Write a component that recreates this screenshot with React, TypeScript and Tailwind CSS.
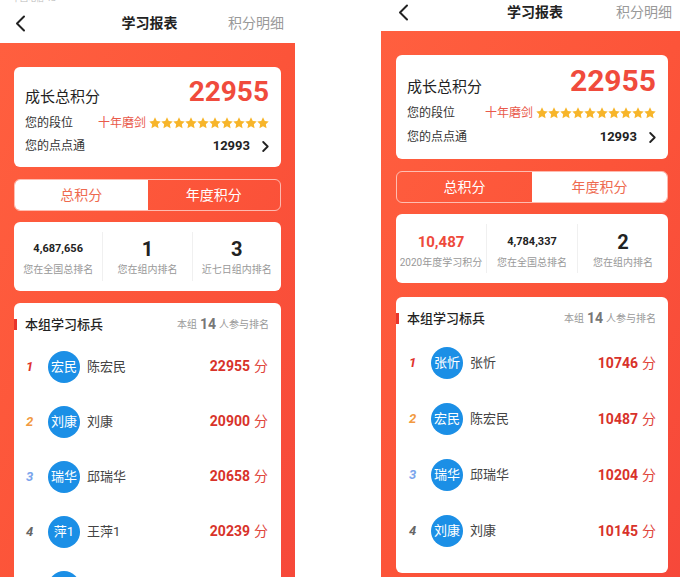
import React from "react";

type Stat = { v: string; l: string; t: "red" | "sm" | "big" };
type Row = { r: number; a: string; n: string; p: number };

const rankColor = ["text-[#e0322b]", "text-[#f29a3f]", "text-[#7aa4ec]", "text-[#666]"];

const Star = ({ size }: { size: number }) => (
  <svg width={size} height={size} viewBox="0 0 24 24">
    <path
      d="M12 0.6l3.5 7.2 7.9 1.1-5.7 5.6 1.4 7.9L12 18.6l-7.1 3.8 1.4-7.9L0.6 8.9l7.9-1.1z"
      fill="#f7b52a"
    />
  </svg>
);

const Back = () => (
  <svg width="11" height="17" viewBox="0 0 11 17" fill="none">
    <path d="M9 1.5L2 8.5l7 7" stroke="#222" strokeWidth="2" strokeLinecap="round" strokeLinejoin="round" />
  </svg>
);

const Arrow = () => (
  <svg width="7" height="11" viewBox="0 0 7 11" fill="none">
    <path d="M1.2 1l4.5 4.5-4.5 4.5" stroke="#222" strokeWidth="1.8" strokeLinecap="round" strokeLinejoin="round" />
  </svg>
);

function Phone({ w, tab, stats, rows }: { w: boolean; tab: 0 | 1; stats: Stat[]; rows: Row[] }) {
  return (
    <div className={w ? "w-[302px] shrink-0" : "w-[295px] shrink-0"}>
      {/* header */}
      <div className="bg-white">
        {!w && (
          <div className="h-[3px] overflow-hidden pl-[12px]">
            <div className="-mt-[6px] text-[8px] leading-[9px] text-[#bbb]">中国电信 4G</div>
          </div>
        )}
        <div className={w ? "flex h-[25px] items-center justify-between pl-[17px] pr-[11px]" : "flex h-[40px] items-center justify-between pl-[15px] pr-[11px]"}>
          <div className="w-[60px]">
            <Back />
          </div>
          <span className="whitespace-nowrap text-[14px] font-bold text-[#222]">学习报表</span>
          <span className="w-[60px] whitespace-nowrap text-right text-[14px] text-[#999]">积分明细</span>
        </div>
        {w && <div className="h-[6px]" />}
      </div>

      {/* red body */}
      <div
        className={
          "bg-gradient-to-br from-[#ff5f3f] via-[#fc5439] to-[#f6483a] pt-[24px] " +
          (w ? "px-[15px] pb-[5px]" : "min-h-[560px] px-[14px]")
        }
      >
        {/* total card */}
        <div className={w ? "h-[104px] rounded-[6px] bg-white pl-[11px] pr-[12px] pt-[10px]" : "h-[100px] rounded-[6px] bg-white pl-[11px] pr-[12px] pt-[10px]"}>
          <div className={w ? "flex h-[32px] items-end justify-between" : "flex h-[30px] items-end justify-between"}>
            <span className="text-[15px] leading-[20px] text-[#222]">成长总积分</span>
            <span className={w ? "text-[30px] font-bold leading-[32px] text-[#f04b3c]" : "text-[28px] font-bold leading-[30px] text-[#f04b3c]"}>22955</span>
          </div>
          <div className="mt-[6px] flex h-[20px] items-center justify-between">
            <span className="text-[12px] text-[#333]">您的段位</span>
            <div className="flex items-center gap-[3px]">
              <span className="text-[12px] text-[#e95a4b]">十年磨剑</span>
              <div className="flex">
                {Array.from({ length: 10 }).map((_, i) => (
                  <Star key={i} size={12} />
                ))}
              </div>
            </div>
          </div>
          <div className={w ? "mt-[4px] flex h-[20px] items-center justify-between" : "mt-[3px] flex h-[20px] items-center justify-between"}>
            <span className="text-[12px] text-[#333]">您的点点通</span>
            <div className="flex items-center gap-[12px]">
              <span className="text-[13px] font-bold text-[#222]">12993</span>
              <Arrow />
            </div>
          </div>
        </div>

        {/* tabs */}
        <div className="mt-[12px] flex h-[32px] overflow-hidden rounded-[6px] border border-white/60">
          <div className={"flex flex-1 items-center justify-center text-[14px] " + (tab === 0 ? "bg-white text-[#ee6a4f]" : "text-white")}>
            总积分
          </div>
          <div className={"flex flex-1 items-center justify-center text-[14px] " + (tab === 1 ? "bg-white text-[#ee6a4f]" : "text-white")}>
            年度积分
          </div>
        </div>

        {/* stats */}
        <div className="mt-[11px] flex h-[69px] rounded-[6px] bg-white">
          {stats.map((s, i) => (
            <React.Fragment key={i}>
              {i > 0 && <div className="my-[10px] w-px bg-[#f0f0f0]" />}
              <div className={w ? "flex flex-1 flex-col items-center pt-[16px]" : "flex flex-1 flex-col items-center pt-[15px]"}>
                <div className="flex h-[24px] items-center">
                  <span
                    className={
                      s.t === "big"
                        ? "text-[20px] font-bold text-[#222]"
                        : s.t === "red"
                        ? "text-[15px] font-bold text-[#ee4a3b]"
                        : "text-[11px] font-bold text-[#222]"
                    }
                  >
                    {s.v}
                  </span>
                </div>
                <span className="mt-[1px] whitespace-nowrap text-[10px] leading-[16px] text-[#999]">{s.l}</span>
              </div>
            </React.Fragment>
          ))}
        </div>

        {/* leaderboard */}
        <div className={w ? "mt-[14px] rounded-[6px] bg-white pb-[14px]" : "mt-[12px] rounded-[6px] bg-white"}>
          <div className="flex items-center justify-between pr-[12px] pt-[11px]">
            <div className="flex h-[20px] items-center">
              <div className="h-[11px] w-[3px] bg-[#e8352b]" />
              <span className="ml-[8px] text-[13px] font-medium text-[#222]">本组学习标兵</span>
            </div>
            <div className="flex items-center gap-[3px] text-[10px] text-[#999]">
              <span>本组</span>
              <span className="text-[14px] font-bold text-[#777]">14</span>
              <span>人参与排名</span>
            </div>
          </div>
          <div className={w ? "mt-[6px]" : "mt-[4px]"}>
            {rows.map((r, i) => (
              <div
                key={i}
                className={w ? "flex h-[56px] items-center pl-[13px] pr-[12px]" : "flex h-[55px] items-center pl-[12px] pr-[13px]"}
              >
                <span className={"w-[22px] text-[13px] font-bold italic " + rankColor[Math.min(r.r, 4) - 1]}>{r.n ? r.r : ""}</span>
                <div className="flex h-[32px] w-[32px] items-center justify-center rounded-full bg-[#1b8fe6] text-[13px] text-white">
                  {r.a}
                </div>
                {r.n && (
                  <>
                    <span className="ml-[7px] flex-1 text-[13px] text-[#444]">{r.n}</span>
                    <span className="text-[14px] font-bold text-[#d8322a]">{r.p}</span>
                    <span className="ml-[4px] text-[14px] text-[#e0463c]">分</span>
                  </>
                )}
              </div>
            ))}
          </div>
        </div>
      </div>
    </div>
  );
}

export default function App() {
  return (
    <div className="flex h-[577px] w-[680px] overflow-hidden bg-white font-[Roboto,'Noto_Sans_CJK_SC',sans-serif]">
      <Phone
        w={false}
        tab={0}
        stats={[
          { v: "4,687,656", l: "您在全国总排名", t: "sm" },
          { v: "1", l: "您在组内排名", t: "big" },
          { v: "3", l: "近七日组内排名", t: "big" },
        ]}
        rows={[
          { r: 1, a: "宏民", n: "陈宏民", p: 22955 },
          { r: 2, a: "刘康", n: "刘康", p: 20900 },
          { r: 3, a: "瑞华", n: "邱瑞华", p: 20658 },
          { r: 4, a: "萍1", n: "王萍1", p: 20239 },
          { r: 5, a: "", n: "", p: 0 },
        ]}
      />
      <div className="w-[86px] shrink-0" />
      <Phone
        w
        tab={1}
        stats={[
          { v: "10,487", l: "2020年度学习积分", t: "red" },
          { v: "4,784,337", l: "您在全国总排名", t: "sm" },
          { v: "2", l: "您在组内排名", t: "big" },
        ]}
        rows={[
          { r: 1, a: "张忻", n: "张忻", p: 10746 },
          { r: 2, a: "宏民", n: "陈宏民", p: 10487 },
          { r: 3, a: "瑞华", n: "邱瑞华", p: 10204 },
          { r: 4, a: "刘康", n: "刘康", p: 10145 },
        ]}
      />
    </div>
  );
}
